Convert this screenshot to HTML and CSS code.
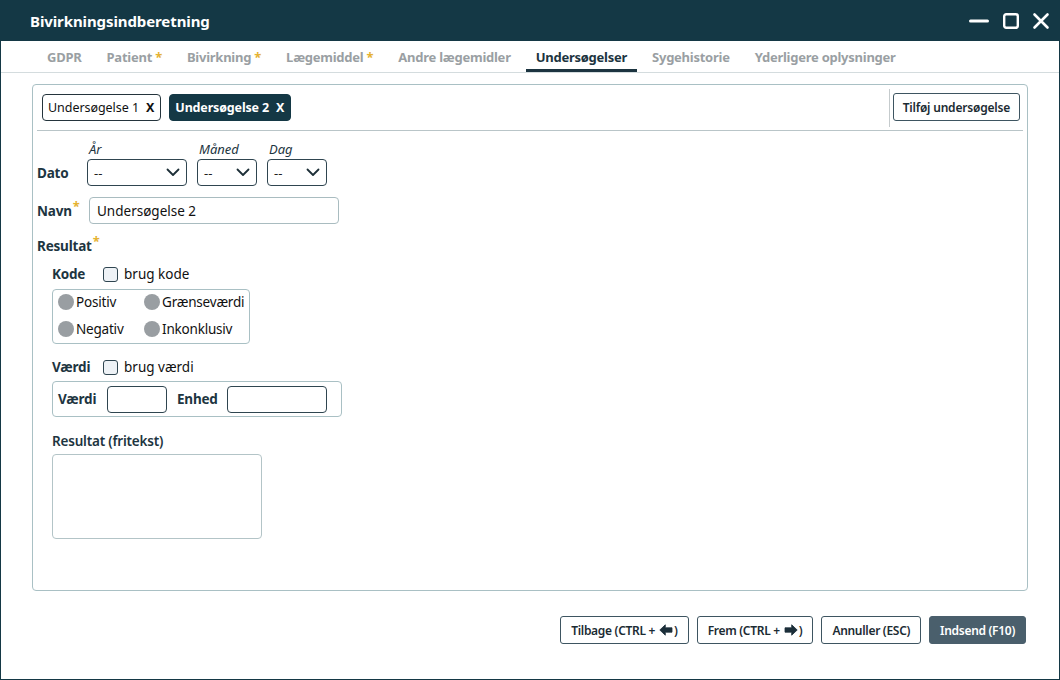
FILE: index.html
```html
<!DOCTYPE html>
<html lang="da">
<head>
<meta charset="utf-8">
<title>Bivirkningsindberetning</title>
<link rel="stylesheet" href="styles.css">
</head>
<body>
<div class="window">
  <header class="titlebar">
    <div class="title">Bivirkningsindberetning</div>
    <div class="winctrls">
      <svg class="wc" width="22" height="16" viewBox="0 0 22 16"><line x1="2.5" y1="8" x2="19.5" y2="8" stroke="#fff" stroke-width="3" stroke-linecap="round"/></svg>
      <svg class="wc" width="18" height="18" viewBox="0 0 18 18"><rect x="2.2" y="2.2" width="13.6" height="13.6" rx="2" fill="none" stroke="#fff" stroke-width="2.4"/></svg>
      <svg class="wc" width="18" height="18" viewBox="0 0 18 18"><path d="M2.5 2.5 L15.5 15.5 M15.5 2.5 L2.5 15.5" stroke="#fff" stroke-width="2.6" stroke-linecap="round"/></svg>
    </div>
  </header>

  <nav class="tabs">
    <span class="tab">GDPR</span>
    <span class="tab">Patient <i class="req">*</i></span>
    <span class="tab">Bivirkning <i class="req">*</i></span>
    <span class="tab">Lægemiddel <i class="req">*</i></span>
    <span class="tab">Andre lægemidler</span>
    <span class="tab active">Undersøgelser</span>
    <span class="tab">Sygehistorie</span>
    <span class="tab">Yderligere oplysninger</span>
  </nav>

  <main class="content">
    <section class="panel">
      <div class="chipbar">
        <div class="chips">
          <span class="chip">Undersøgelse 1 <b class="x">X</b></span>
          <span class="chip selected">Undersøgelse 2 <b class="x">X</b></span>
        </div>
        <div class="chipactions">
          <button class="btn small">Tilføj undersøgelse</button>
        </div>
      </div>

      <div class="form">
        <div class="row dato-row">
          <span class="lbl dato-lbl">Dato</span>
          <div class="field">
            <span class="sublbl">År</span>
            <div class="select w100"><span>--</span><svg width="14" height="9" viewBox="0 0 14 9"><path d="M1.5 1.5 L7 7 L12.5 1.5" fill="none" stroke="#1d2f38" stroke-width="1.8" stroke-linecap="round" stroke-linejoin="round"/></svg></div>
          </div>
          <div class="field">
            <span class="sublbl">Måned</span>
            <div class="select w60"><span>--</span><svg width="14" height="9" viewBox="0 0 14 9"><path d="M1.5 1.5 L7 7 L12.5 1.5" fill="none" stroke="#1d2f38" stroke-width="1.8" stroke-linecap="round" stroke-linejoin="round"/></svg></div>
          </div>
          <div class="field">
            <span class="sublbl">Dag</span>
            <div class="select w60"><span>--</span><svg width="14" height="9" viewBox="0 0 14 9"><path d="M1.5 1.5 L7 7 L12.5 1.5" fill="none" stroke="#1d2f38" stroke-width="1.8" stroke-linecap="round" stroke-linejoin="round"/></svg></div>
          </div>
        </div>

        <div class="row navn-row">
          <span class="lbl navn-lbl">Navn<sup class="req">*</sup></span>
          <div class="input navn">Undersøgelse 2</div>
        </div>

        <div class="lbl resultat">Resultat<sup class="req">*</sup></div>

        <div class="sub">
          <div class="checkrow">
            <span class="lbl">Kode</span>
            <span class="checkbox"></span>
            <span class="checktext">brug kode</span>
          </div>
          <div class="group radios">
            <span class="radio"><span class="dot"></span>Positiv</span>
            <span class="radio"><span class="dot"></span>Grænseværdi</span>
            <span class="radio"><span class="dot"></span>Negativ</span>
            <span class="radio"><span class="dot"></span>Inkonklusiv</span>
          </div>

          <div class="checkrow vaerdi-check">
            <span class="lbl">Værdi</span>
            <span class="checkbox"></span>
            <span class="checktext">brug værdi</span>
          </div>
          <div class="group values">
            <span class="lbl">Værdi</span>
            <div class="input dark w60"></div>
            <span class="lbl">Enhed</span>
            <div class="input dark w100"></div>
          </div>

          <div class="lbl fritekst-lbl">Resultat (fritekst)</div>
          <div class="textarea"></div>
        </div>
      </div>
    </section>
  </main>

  <footer class="footer">
    <button class="btn">Tilbage (CTRL + <svg class="arr" width="14" height="12" viewBox="0 0 14 12"><path d="M0.8 6 L6.3 0.8 L6.3 3.8 L13 3.8 L13 8.2 L6.3 8.2 L6.3 11.2 Z" fill="#1c2f3a" stroke="#1c2f3a" stroke-width="0.8" stroke-linejoin="round"/></svg>)</button>
    <button class="btn">Frem (CTRL + <svg class="arr" width="14" height="12" viewBox="0 0 14 12"><path d="M13.2 6 L7.7 0.8 L7.7 3.8 L1 3.8 L1 8.2 L7.7 8.2 L7.7 11.2 Z" fill="#1c2f3a" stroke="#1c2f3a" stroke-width="0.8" stroke-linejoin="round"/></svg>)</button>
    <button class="btn">Annuller (ESC)</button>
    <button class="btn primary">Indsend (F10)</button>
  </footer>
</div>
</body>
</html>
```

FILE: styles.css
```css
* { box-sizing: border-box; }
html, body { margin: 0; padding: 0; background: #fff; }
body {
  font-family: "Noto Sans", "Open Sans", sans-serif;
  font-size: 13px;
  color: #1b2b33;
}
.window {
  width: 1060px;
  height: 680px;
  border: 1px solid #143845;
  display: flex;
  flex-direction: column;
  background: #fff;
}
.titlebar {
  background: #143845;
  display: flex;
  align-items: center;
  justify-content: space-between;
  padding: 0 10px 0 30px;
  margin: -1px -1px 0 -1px;
  height: 41px;
}
.title {
  color: #fff;
  font-weight: 700;
  font-size: 15px;
  letter-spacing: -0.1px;
}
.winctrls { display: flex; align-items: center; gap: 12px; }
.wc { display: block; }

.tabs {
  height: 32px;
  border-bottom: 1px solid #d4dcde;
  display: flex;
  align-items: stretch;
  padding-left: 36px;
  gap: 5px;
}
.tab {
  font-weight: 700;
  font-size: 13px;
  color: #9a9fa3;
  padding: 0 10px;
  display: flex;
  align-items: center;
  white-space: pre;
  border-bottom: 3px solid transparent;
  padding-top: 3px;
  letter-spacing: -0.25px;
}
.tab.active { color: #1c3440; border-bottom-color: #1c3440; }
.req { color: #e5b232; font-style: normal; font-weight: 700; }
sup.req { font-size: 13px; vertical-align: 0; position: relative; top: -5px; margin-left: 1px; }

.content { flex: 1; padding: 11px 31px 0 31px; }
.panel {
  height: 507px;
  border: 1px solid #a9c0c4;
  border-radius: 4px;
  padding: 4px 4px 0 4px;
}
.chipbar {
  display: flex;
  border-bottom: 1px solid #b9c5c8;
  height: 42px;
}
.chips {
  flex: 1;
  display: flex;
  gap: 8px;
  padding: 5px 0 0 5px;
  align-items: flex-start;
}
.chip {
  height: 27px;
  border: 1px solid #24343c;
  border-radius: 4px;
  padding: 0 6px 0 5px;
  display: flex;
  align-items: center;
  font-size: 12.5px;
  color: #111;
  letter-spacing: -0.05px;
}
.chip .x { font-weight: 700; margin-left: 7px; }
.chip.selected { background: #143845; border-color: #143845; color: #fff; font-weight: 700; letter-spacing: -0.15px; }
.chipactions {
  border-left: 1px solid #c5cbcd;
  padding: 4px 3px 0 3px;
  margin-bottom: 3px;
}
.btn {
  font-family: inherit;
  height: 28px;
  border: 1px solid #3e5561;
  border-radius: 3px;
  background: #fff;
  color: #1b2b33;
  font-size: 12px;
  font-weight: 600;
  padding: 0 10px;
  display: inline-flex;
  align-items: center;
  letter-spacing: -0.3px;
}
.btn.small { font-size: 12px; padding: 0 9px; letter-spacing: -0.2px; }
.arr { margin: 0 1px 0 4px; }

.form { padding: 10px 0 0 0; }
.row { display: flex; }
.lbl { font-weight: 700; color: #1d3541; font-size: 13.5px; letter-spacing: -0.2px; }
.dato-row { align-items: flex-end; gap: 10px; }
.dato-lbl { width: 40px; height: 27px; display: flex; align-items: center; }
.field { display: flex; flex-direction: column; }
.sublbl { font-style: italic; font-size: 13px; color: #1d3541; padding-left: 2px; line-height: 16px; margin-bottom: 2px; }
.select {
  height: 27px;
  border: 1px solid #2f4550;
  border-radius: 4px;
  display: flex;
  align-items: center;
  justify-content: space-between;
  padding: 0 6px 0 6px;
  color: #222;
}
.select svg { display: block; }
.w100 { width: 100px; }
.w60 { width: 60px; }

.navn-row { margin-top: 11px; align-items: center; }
.navn-lbl { width: 52px; }
.input {
  height: 27px;
  border: 1px solid #a9bcc0;
  border-radius: 4px;
  display: flex;
  align-items: center;
  padding: 0 7px;
  color: #111;
  font-size: 13.5px;
}
.input.navn { width: 250px; }
.input.dark { border-color: #2f4550; }

.resultat { margin-top: 12px; line-height: 20px; }
.sub { padding-left: 15px; }
.checkrow { display: flex; align-items: center; margin-top: 9px; height: 18px; }
.checkrow .lbl { width: 51px; }
.checkbox {
  width: 15px; height: 15px;
  border: 1px solid #2f4550;
  border-radius: 3px;
  background: #eef2f6;
  margin-right: 6px;
}
.checktext { font-size: 13.5px; color: #111; }

.group {
  border: 1px solid #a9c0c4;
  border-radius: 4px;
  margin-top: 6px;
}
.radios {
  width: 198px;
  height: 55px;
  display: grid;
  grid-template-columns: 86px 1fr;
  grid-auto-rows: 27px;
  padding: 0 0 3px 5px;
  align-content: center;
  align-items: center;
}
.radio { display: flex; align-items: center; font-size: 13.5px; color: #111; letter-spacing: -0.2px; }
.dot { width: 16px; height: 16px; border-radius: 50%; background: #999ea2; margin-right: 2px; flex: none; }

.vaerdi-check { margin-top: 14px; }
.values {
  width: 290px;
  height: 36px;
  display: flex;
  align-items: center;
  padding: 0 5px;
  margin-top: 5px;
}
.values .lbl:first-child { width: 49px; }
.values .lbl:nth-child(3) { margin-left: 10px; width: 50px; }

.fritekst-lbl { margin-top: 15px; font-weight: 600; line-height: 18px; }
.textarea {
  width: 210px;
  height: 85px;
  border: 1px solid #b3c4c7;
  border-radius: 4px;
  margin-top: 4px;
}

.footer {
  height: 88px;
  display: flex;
  justify-content: flex-end;
  align-items: flex-start;
  gap: 8px;
  padding: 25px 33px 0 0;
}
.btn.primary { background: #4a5f6c; border-color: #4a5f6c; color: #fff; }
```
